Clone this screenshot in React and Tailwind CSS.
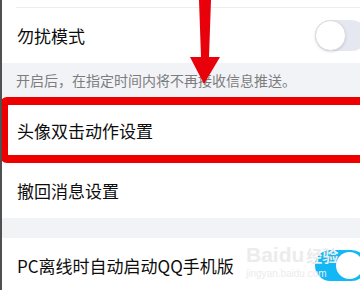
import React from 'react';

const cjk = { fontFamily: '"Noto Sans CJK SC", "Noto Sans", sans-serif' };

const Toggle = ({ on }) =>
  on ? (
    <div className="relative shrink-0 w-[52px] h-[31px] rounded-full bg-[#12b7f5] -mr-[15px]">
      <div className="absolute top-[2px] left-[21px] w-[27px] h-[27px] rounded-full bg-white" />
    </div>
  ) : (
    <div className="relative shrink-0 w-[52px] h-[31px] rounded-full bg-[#e6e8f1] -mr-[15px]">
      <div className="absolute top-0 left-0 w-[31px] h-[31px] rounded-full bg-white border border-[#dcdde2] shadow-sm" />
    </div>
  );

const Row = ({ label, toggle, height = 'h-[55px]' }) => (
  <div className={`flex items-center justify-between pl-[15px] pr-[8px] ${height} bg-white`}>
    <span className="text-[17px] text-[#0d0d0d] leading-none" style={cjk}>{label}</span>
    {toggle}
  </div>
);

export default function App() {
  return (
    <div className="relative w-[360px] h-[290px] overflow-hidden bg-white border-l-2 border-[#505050]">
      <div className="h-[8px] ml-[14px] border-b border-[#eceef2]" />
      <Row label="勿扰模式" toggle={<Toggle on={false} />} />
      <div className="h-[34px] bg-[#f2f3f7] flex items-center pl-[14px]">
        <span className="text-[14px] text-[#7d7d7d] leading-none" style={cjk}>
          开启后，在指定时间内将不再接收信息推送。
        </span>
      </div>
      <div className="-ml-[2px] -mr-[10px] h-[66px] border-[8px] border-[#ee0000] rounded-[7px] bg-white flex items-center pl-[9px]">
        <span className="text-[17px] text-[#0d0d0d] leading-none" style={cjk}>头像双击动作设置</span>
      </div>
      <Row label="撤回消息设置" />
      <div className="h-[20px] bg-[#f2f3f7]" />
      <Row label="PC离线时自动启动QQ手机版" toggle={<Toggle on />} />

      <div className="absolute left-[244px] top-[244px] flex flex-col items-start pointer-events-none">
        <span className="text-[21px] leading-none font-bold text-[#ececec]" style={{ fontFamily: '"Liberation Sans", sans-serif' }}>
          Baidu<span className="text-[16px] ml-[2px]" style={cjk}>经验</span>
        </span>
        <span className="text-[10px] leading-none mt-[4px] text-[#ececec]" style={{ fontFamily: '"Liberation Sans", sans-serif' }}>
          jingyan.baidu.com
        </span>
      </div>

      <svg className="absolute left-[186px] top-0" width="34" height="90" viewBox="0 0 34 90">
        <polygon points="11,0 23,0 21,57 32,57 16,84 2,57 13,57" fill="#e8000a" />
      </svg>
    </div>
  );
}
